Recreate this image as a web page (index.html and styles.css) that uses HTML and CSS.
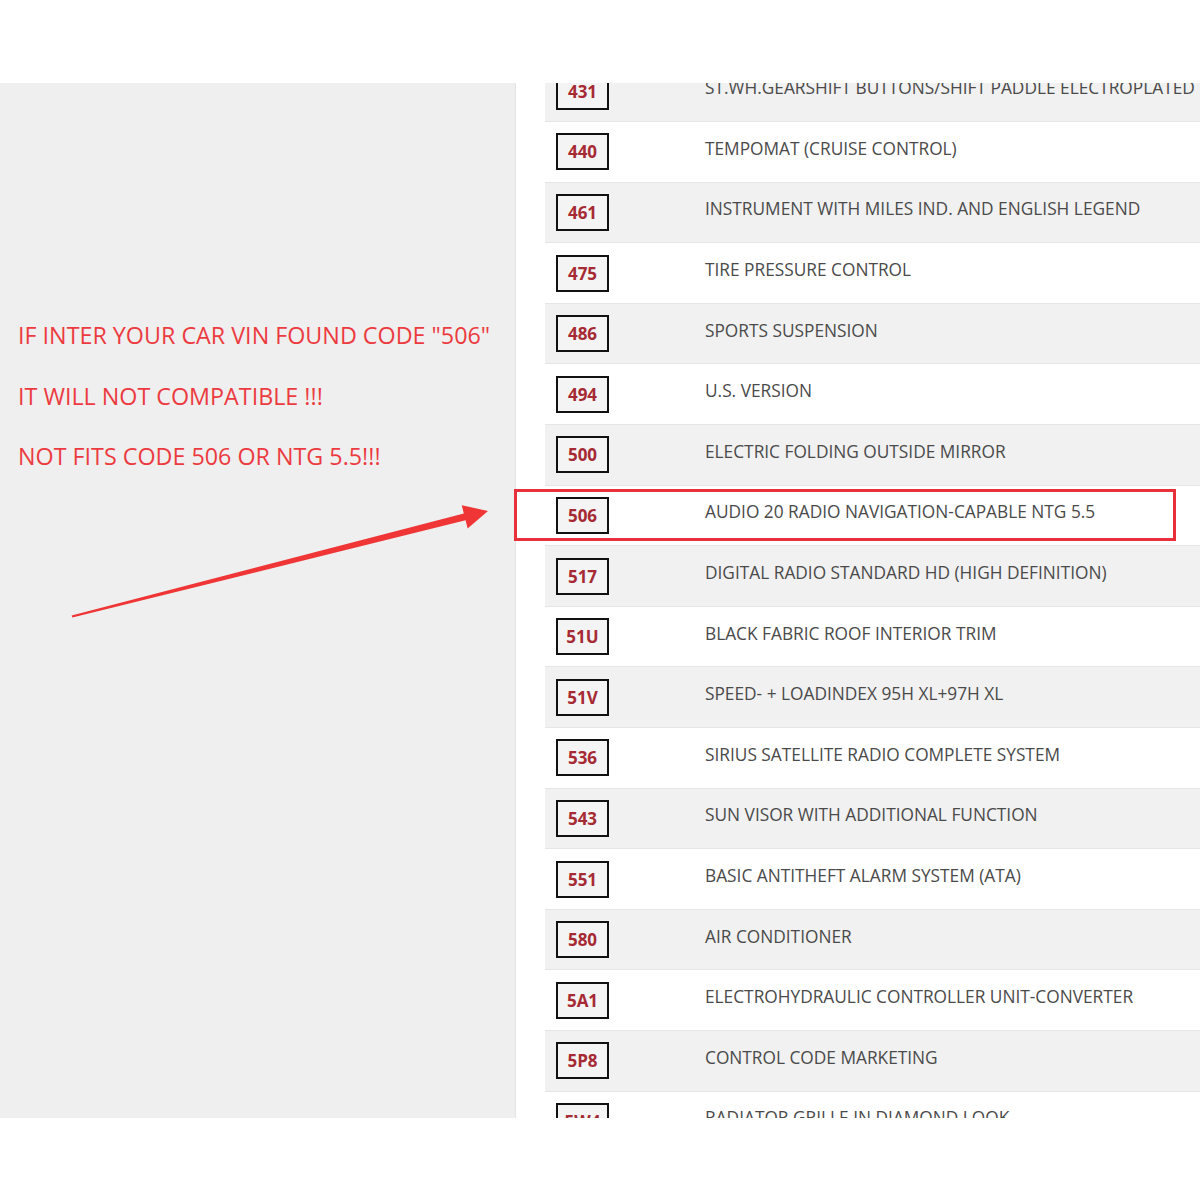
FILE: index.html
```html
<!DOCTYPE html>
<html lang="en">
<head>
    <meta charset="UTF-8">
    <title>Option codes</title>
    <link rel="stylesheet" href="styles.css">
</head>
<body>
    <div class="shot">
        <div class="note">
            <p>IF INTER YOUR CAR VIN FOUND CODE "506"</p>
            <p>IT WILL NOT COMPATIBLE !!!</p>
            <p>NOT FITS CODE 506 OR NTG 5.5!!!</p>
        </div>
        <div class="codes">
            <div class="row"><span class="code">431</span><span class="desc">ST.WH.GEARSHIFT BUTTONS/SHIFT PADDLE ELECTROPLATED</span></div>
            <div class="row"><span class="code">440</span><span class="desc">TEMPOMAT (CRUISE CONTROL)</span></div>
            <div class="row"><span class="code">461</span><span class="desc">INSTRUMENT WITH MILES IND. AND ENGLISH LEGEND</span></div>
            <div class="row"><span class="code">475</span><span class="desc">TIRE PRESSURE CONTROL</span></div>
            <div class="row"><span class="code">486</span><span class="desc">SPORTS SUSPENSION</span></div>
            <div class="row"><span class="code">494</span><span class="desc">U.S. VERSION</span></div>
            <div class="row"><span class="code">500</span><span class="desc">ELECTRIC FOLDING OUTSIDE MIRROR</span></div>
            <div class="row"><span class="code">506</span><span class="desc">AUDIO 20 RADIO NAVIGATION-CAPABLE NTG 5.5</span></div>
            <div class="row"><span class="code">517</span><span class="desc">DIGITAL RADIO STANDARD HD (HIGH DEFINITION)</span></div>
            <div class="row"><span class="code">51U</span><span class="desc">BLACK FABRIC ROOF INTERIOR TRIM</span></div>
            <div class="row"><span class="code">51V</span><span class="desc">SPEED- + LOADINDEX 95H XL+97H XL</span></div>
            <div class="row"><span class="code">536</span><span class="desc">SIRIUS SATELLITE RADIO COMPLETE SYSTEM</span></div>
            <div class="row"><span class="code">543</span><span class="desc">SUN VISOR WITH ADDITIONAL FUNCTION</span></div>
            <div class="row"><span class="code">551</span><span class="desc">BASIC ANTITHEFT ALARM SYSTEM (ATA)</span></div>
            <div class="row"><span class="code">580</span><span class="desc">AIR CONDITIONER</span></div>
            <div class="row"><span class="code">5A1</span><span class="desc">ELECTROHYDRAULIC CONTROLLER UNIT-CONVERTER</span></div>
            <div class="row"><span class="code">5P8</span><span class="desc">CONTROL CODE MARKETING</span></div>
            <div class="row"><span class="code">5W4</span><span class="desc">RADIATOR GRILLE IN DIAMOND LOOK</span></div>
        </div>
        <!-- marca em cima da linha 506 -->
        <div class="highlight"></div>
        <svg class="arrow" width="520" height="1035" viewBox="0 0 520 1035">
            <polygon points="71.6,532.4 463.8,430.5 461.8,422.3 488,428 467.6,445.5 465.6,437.3 72.4,534.6" fill="#ef3535"/>
        </svg>
    </div>
</body>
</html>
```

FILE: styles.css
```css
body {
    margin: 0;
    background-color: #fff;
    font-family: "Open Sans", "Noto Sans", sans-serif;
}
.shot {
    position: relative;
    margin-top: 83px;
    height: 1035px;
    overflow: hidden;
    display: flex;
    background-color: #fff;
}
.note {
    width: 516px;
    flex-shrink: 0;
    background-color: #efefef;
    border-right: 1px solid #e4e4e4;
    padding-top: 237px;
    box-sizing: border-box;
}
.note p {
    margin: 0;
    height: 60.6px;
    line-height: 30px;
    padding-left: 18px;
    color: #ec3b40;
    font-size: 23.3px;
}
.codes {
    flex: 1;
    margin-left: 29px;
    margin-top: -21.5px;
}
.row {
    height: 60.6px;
    box-sizing: border-box;
    border-bottom: 1px solid #e6e6e6;
    display: flex;
    align-items: center;
    padding-left: 11px;
}
.row:nth-child(odd) {
    background-color: #f1f1f1;
}
.code {
    width: 49px;
    height: 33px;
    border: 2px solid #111;
    background-color: #f4f4f4;
    color: #a62a33;
    font-weight: bold;
    font-size: 17px;
    line-height: 33px;
    text-align: center;
    flex-shrink: 0;
}
.desc {
    margin-left: 96px;
    margin-top: -7px;
    color: #4a4a4a;
    font-size: 17.3px;
    white-space: nowrap;
}
.highlight {
    position: absolute;
    left: 514px;
    top: 406px;
    width: 656px;
    height: 46px;
    border: 3px solid #e8303a;
}
.arrow {
    position: absolute;
    left: 0;
    top: 0;
}
```
